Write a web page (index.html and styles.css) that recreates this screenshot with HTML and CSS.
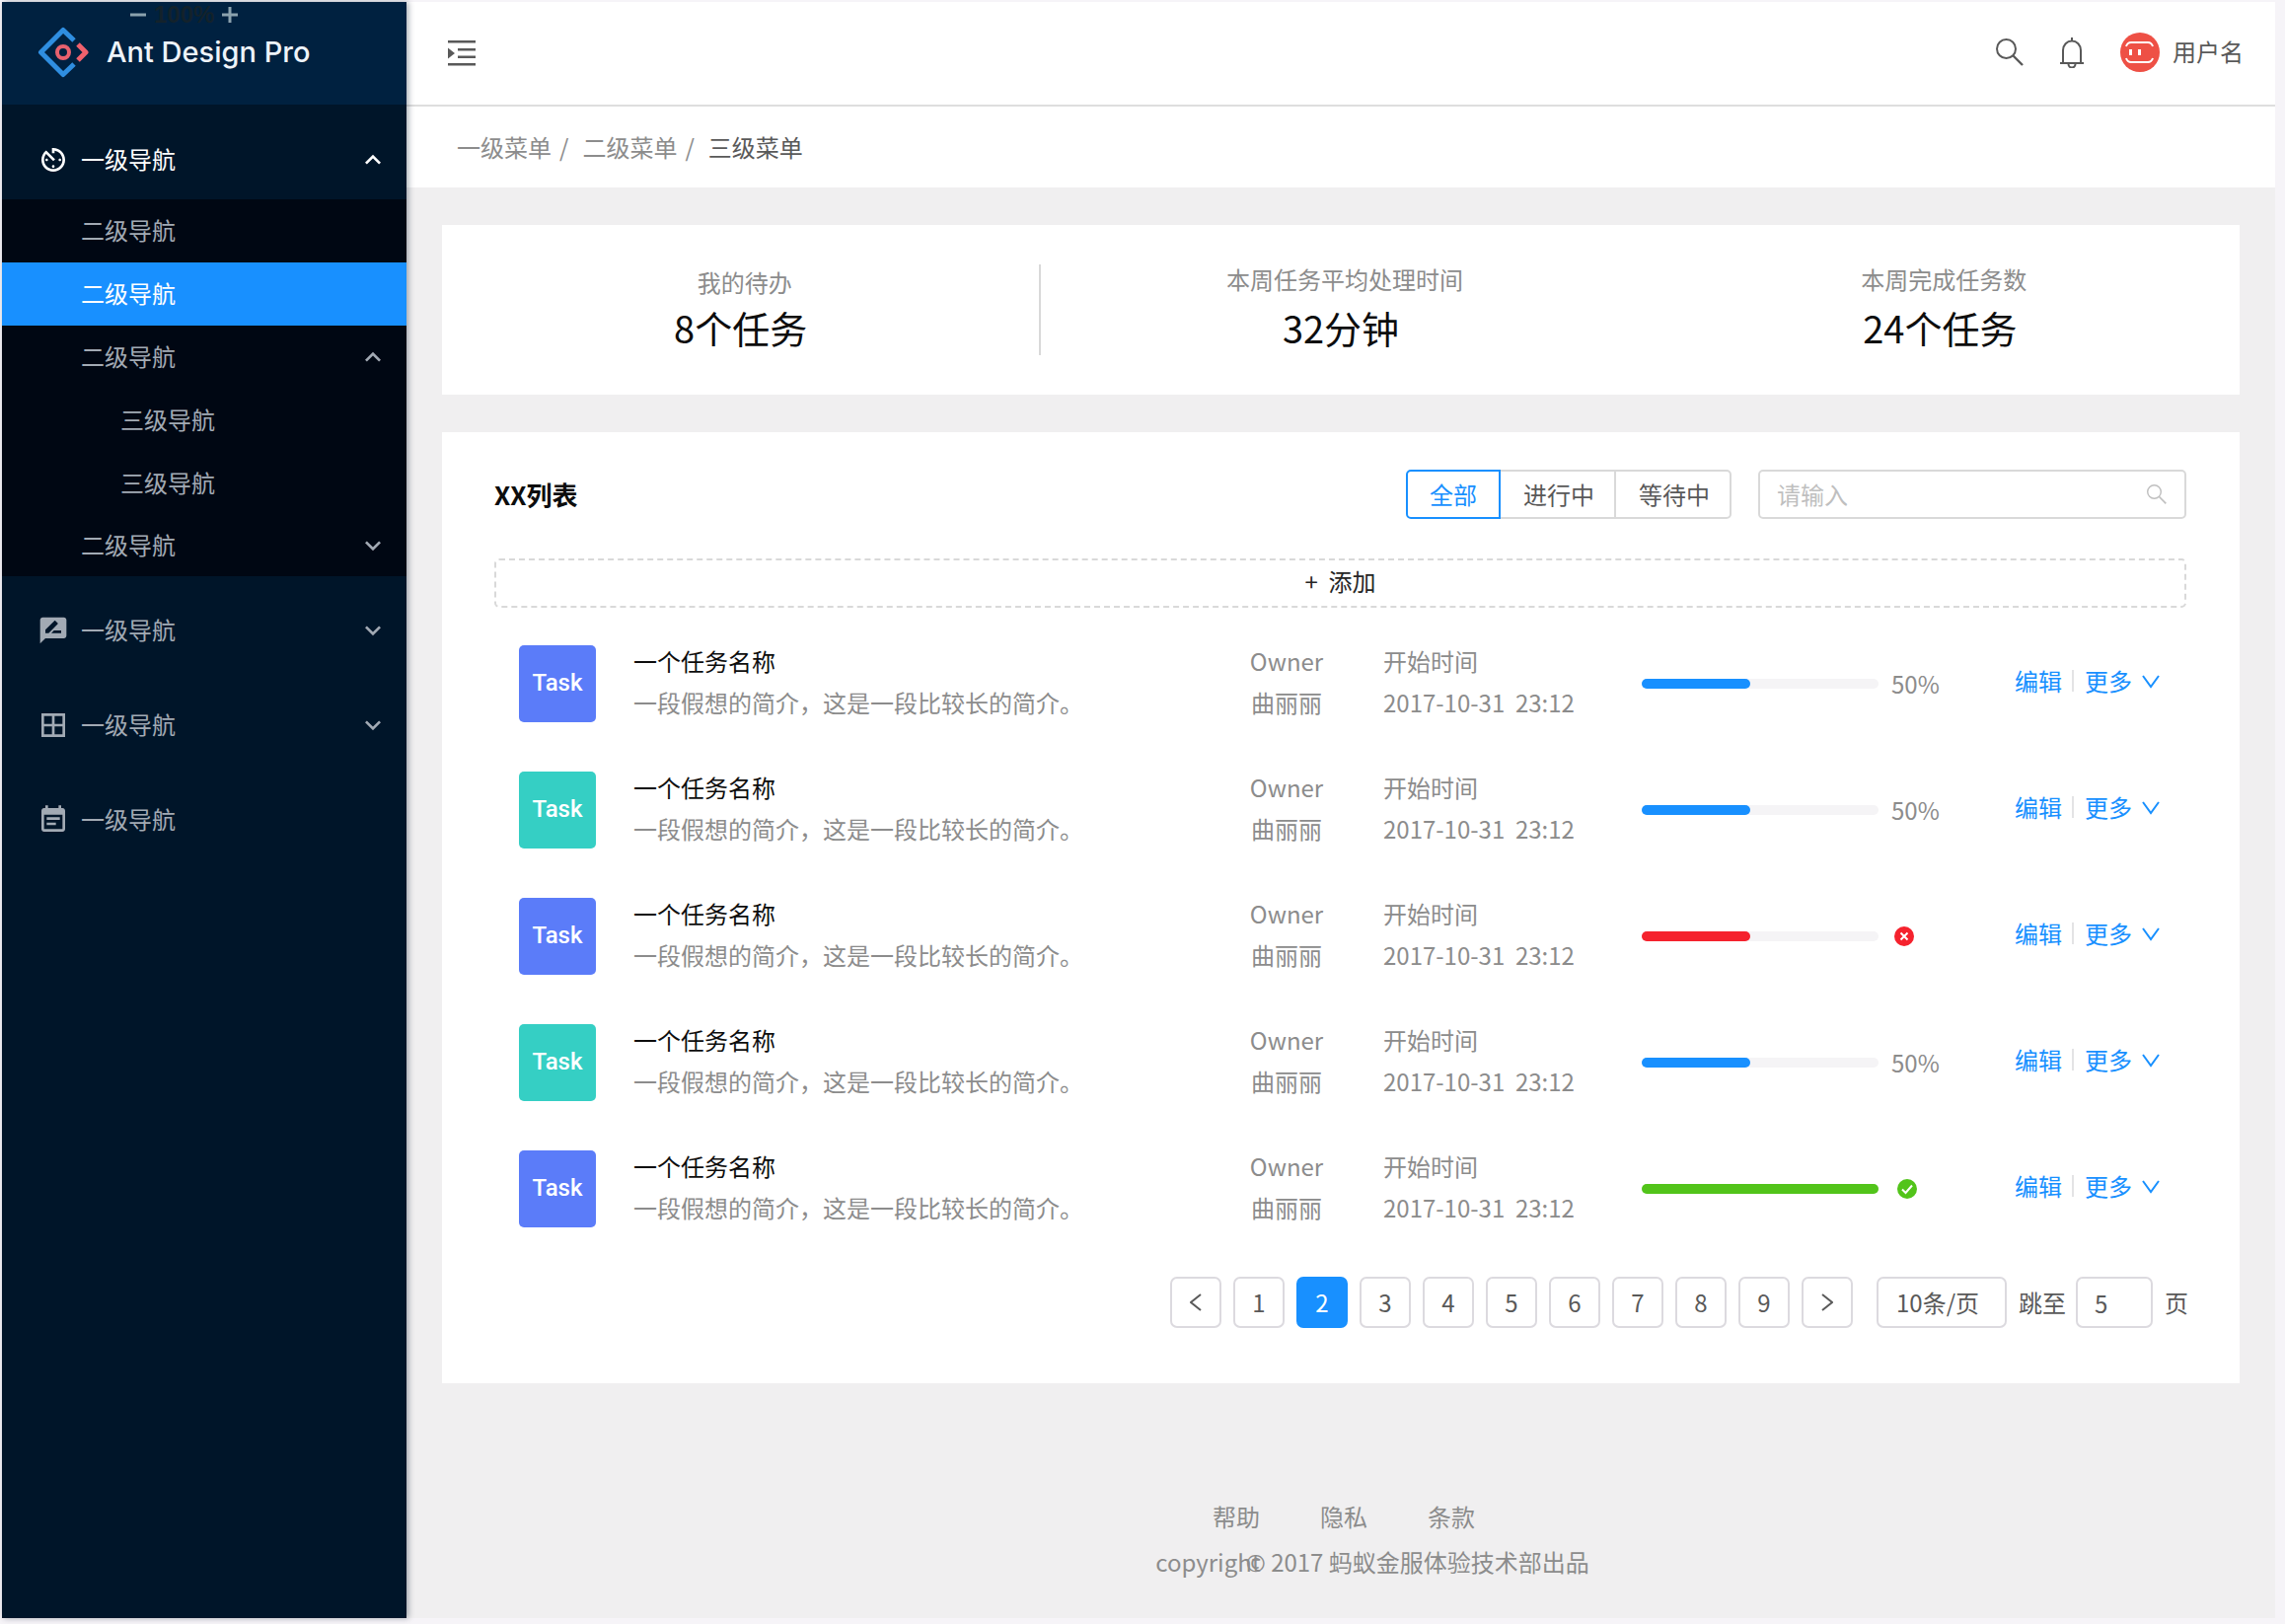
FILE: index.html
```html
<!DOCTYPE html>
<html lang="zh-CN">
<head>
  <meta charset="UTF-8">
  <meta name="viewport" content="width=device-width, initial-scale=1.0">
  <title>Ant Design Pro</title>
  <link rel="stylesheet" href="styles.css">
</head>
<body>

<!-- icons -->
<svg class="sprite" aria-hidden="true">
  <symbol id="i-up" viewBox="0 0 24 24"><path d="M7.41 15.41L12 10.83l4.59 4.58L18 14l-6-6-6 6z"/></symbol>
  <symbol id="i-down" viewBox="0 0 24 24"><path d="M7.41 8.59L12 13.17l4.59-4.58L18 10l-6 6-6-6z"/></symbol>
  <symbol id="i-timer" viewBox="0 0 24 24"><path d="M11 17c0 .55.45 1 1 1s1-.45 1-1-.45-1-1-1-1 .45-1 1zm0-14v4h2V5.08c3.39.49 6 3.39 6 6.92 0 3.87-3.13 7-7 7s-7-3.13-7-7c0-1.68.59-3.22 1.58-4.42L12 13l1.41-1.41-6.8-6.8v.02C4.42 6.45 3 9.05 3 12c0 4.97 4.02 9 9 9 4.97 0 9-4.03 9-9s-4.03-9-9-9h-1zm7 9c0-.55-.45-1-1-1s-1 .45-1 1 .45 1 1 1 1-.45 1-1zM6 12c0 .55.45 1 1 1s1-.45 1-1-.45-1-1-1-1 .45-1 1z"/></symbol>
  <symbol id="i-review" viewBox="0 0 24 24"><path d="M20 2H4c-1.1 0-1.99.9-1.99 2L2 22l4-4h14c1.1 0 2-.9 2-2V4c0-1.1-.9-2-2-2zM6 14v-2.47l6.88-6.88c.2-.2.51-.2.71 0l1.77 1.77c.2.2.2.51 0 .71L8.47 14H6zm12 0h-7.5l2-2H18v2z"/></symbol>
  <symbol id="i-grid" viewBox="0 0 24 24"><path d="M3 3v18h18V3H3zm8 16H5v-6h6v6zm0-8H5V5h6v6zm8 8h-6v-6h6v6zm0-8h-6V5h6v6z"/></symbol>
  <symbol id="i-note" viewBox="0 0 24 24"><path d="M17 10H7v2h10v-2zm2-7h-1V1h-2v2H8V1H6v2H5c-1.11 0-1.99.9-1.99 2L3 19c0 1.1.89 2 2 2h14c1.1 0 2-.9 2-2V5c0-1.1-.9-2-2-2zm0 16H5V8h14v11zm-5-5H7v2h7v-2z"/></symbol>
  <symbol id="i-search" viewBox="0 0 28 28"><circle cx="10.5" cy="10.5" r="9.5" fill="none" stroke="currentColor" stroke-width="2"/><path d="M17.5 17.5L27 27" stroke="currentColor" stroke-width="2.4"/></symbol>
  <symbol id="i-more" viewBox="0 0 18 14"><path d="M1 1l8 11 8-11" fill="none" stroke="currentColor" stroke-width="2"/></symbol>
</svg>

<div class="layout">
  <aside class="sider">
    <div class="logo">
      <div class="zoom">
        <svg width="16" height="16" stroke="currentColor" stroke-width="3"><path d="M0 8h16"/></svg>
        <b>100%</b>
        <svg width="16" height="16" stroke="currentColor" stroke-width="3"><path d="M0 8h16M8 0v16"/></svg>
      </div>
      <svg width="52" height="52" viewBox="0 0 52 52" fill="none" stroke-width="5">
        <path d="M37 14L26 3.500 3.500 26 26 48.500 37 38" stroke="#2f8ee0" stroke-linejoin="round"/>
        <circle cx="26" cy="26" r="6" stroke="#e8616e" stroke-width="4"/>
        <path d="M41 18l8 8-8 8" stroke="#f0616d" stroke-linejoin="round"/>
      </svg>
      <span class="logo-text">Ant Design Pro</span>
    </div>
    <nav class="menu">
      <button class="menu-item open"><svg class="icon"><use href="#i-timer"/></svg><span>一级导航</span><svg class="icon arrow"><use href="#i-up"/></svg></button>
      <div class="submenu">
        <a class="sub-item" href="#"><span>二级导航</span></a>
        <a class="sub-item active" href="#"><span>二级导航</span></a>
        <button class="sub-item"><span>二级导航</span><svg class="icon arrow"><use href="#i-up"/></svg></button>
        <a class="sub-item third" href="#"><span>三级导航</span></a>
        <a class="sub-item third" href="#"><span>三级导航</span></a>
        <button class="sub-item last"><span>二级导航</span><svg class="icon arrow"><use href="#i-down"/></svg></button>
      </div>
      <button class="menu-item"><svg class="icon"><use href="#i-review"/></svg><span>一级导航</span><svg class="icon arrow"><use href="#i-down"/></svg></button>
      <button class="menu-item"><svg class="icon"><use href="#i-grid"/></svg><span>一级导航</span><svg class="icon arrow"><use href="#i-down"/></svg></button>
      <a class="menu-item" href="#"><svg class="icon"><use href="#i-note"/></svg><span>一级导航</span></a>
    </nav>
  </aside>

  <div class="main">
    <header class="header">
      <button class="icon-btn" aria-label="收起菜单">
        <svg width="28" height="26" viewBox="0 0 28 26" fill="currentColor"><path d="M0 0h28v2.500H0zM10 8h18v2.500H10zM10 15.500h18V18H10zM0 23h28v2.500H0zM0 7.500l7 5.500-7 5.500z"/></svg>
      </button>
      <div class="header-right">
        <button class="icon-btn" aria-label="搜索"><svg width="28" height="28"><use href="#i-search"/></svg></button>
        <button class="icon-btn" aria-label="通知">
          <svg width="24" height="32" viewBox="0 0 24 32" fill="none" stroke="currentColor" stroke-width="2"><path d="M3 27V14a9 9.500 0 0 1 18 0v13M0 27h24M12 1v4M8.500 28a3.500 3.500 0 0 0 7 0"/></svg>
        </button>
        <a class="user" href="#">
          <svg width="40" height="40" viewBox="0 0 40 40"><circle cx="20" cy="20" r="20" fill="#ee5045"/><path d="M6 14c1-3 3-4 5-4h17c3 0 4 1 5 4M6 26c1 3 3 4 5 4h17c3 0 4-1 5-4" fill="none" stroke="#fff" stroke-width="2"/><path d="M9 17h3v6H9zM18 17h3v6h-3z" fill="#fff"/></svg>
          <span>用户名</span>
        </a>
      </div>
    </header>

    <nav class="breadcrumb">
      <a href="#">一级菜单</a><span class="sep">/</span><a href="#">二级菜单</a><span class="sep">/</span><span class="current">三级菜单</span>
    </nav>

    <main class="content">
      <section class="card stats">
        <div class="stat divided"><span class="stat-label">我的待办</span><span class="stat-value">8个任务</span></div>
        <div class="stat"><span class="stat-label">本周任务平均处理时间</span><span class="stat-value">32分钟</span></div>
        <div class="stat"><span class="stat-label">本周完成任务数</span><span class="stat-value">24个任务</span></div>
      </section>

      <section class="card list-card">
        <div class="list-head">
          <h2>XX列表</h2>
          <div class="tabs">
            <button class="tab active">全部</button>
            <button class="tab">进行中</button>
            <button class="tab">等待中</button>
          </div>
          <div class="search">
            <input type="text" placeholder="请输入" aria-label="搜索任务">
            <svg width="22" height="20"><use href="#i-search"/></svg>
          </div>
        </div>
        <button class="add">+&nbsp; 添加</button>

        <ul class="list">
          <li class="row">
            <div class="avatar blue">Task</div>
            <div class="info"><span class="name">一个任务名称</span><span>一段假想的简介，这是一段比较长的简介。</span></div>
            <div class="info owner"><span>Owner</span><span>曲丽丽</span></div>
            <div class="info"><span>开始时间</span><span>2017-10-31&nbsp; 23:12</span></div>
            <div class="progress"><div class="bar"><div class="fill" style="width: 46%"></div></div>50%</div>
            <div class="actions"><a href="#">编辑</a><i></i><a href="#">更多<svg width="18" height="14"><use href="#i-more"/></svg></a></div>
          </li>
          <li class="row">
            <div class="avatar green">Task</div>
            <div class="info"><span class="name">一个任务名称</span><span>一段假想的简介，这是一段比较长的简介。</span></div>
            <div class="info owner"><span>Owner</span><span>曲丽丽</span></div>
            <div class="info"><span>开始时间</span><span>2017-10-31&nbsp; 23:12</span></div>
            <div class="progress"><div class="bar"><div class="fill" style="width: 46%"></div></div>50%</div>
            <div class="actions"><a href="#">编辑</a><i></i><a href="#">更多<svg width="18" height="14"><use href="#i-more"/></svg></a></div>
          </li>
          <li class="row">
            <div class="avatar blue">Task</div>
            <div class="info"><span class="name">一个任务名称</span><span>一段假想的简介，这是一段比较长的简介。</span></div>
            <div class="info owner"><span>Owner</span><span>曲丽丽</span></div>
            <div class="info"><span>开始时间</span><span>2017-10-31&nbsp; 23:12</span></div>
            <div class="progress"><div class="bar"><div class="fill error" style="width: 46%"></div></div><svg class="status" viewBox="0 0 20 20"><circle cx="10" cy="10" r="10" fill="#f5222d"/><path d="M6.500 6.500l7 7M13.500 6.500l-7 7" stroke="#fff" stroke-width="2"/></svg></div>
            <div class="actions"><a href="#">编辑</a><i></i><a href="#">更多<svg width="18" height="14"><use href="#i-more"/></svg></a></div>
          </li>
          <li class="row">
            <div class="avatar green">Task</div>
            <div class="info"><span class="name">一个任务名称</span><span>一段假想的简介，这是一段比较长的简介。</span></div>
            <div class="info owner"><span>Owner</span><span>曲丽丽</span></div>
            <div class="info"><span>开始时间</span><span>2017-10-31&nbsp; 23:12</span></div>
            <div class="progress"><div class="bar"><div class="fill" style="width: 46%"></div></div>50%</div>
            <div class="actions"><a href="#">编辑</a><i></i><a href="#">更多<svg width="18" height="14"><use href="#i-more"/></svg></a></div>
          </li>
          <li class="row">
            <div class="avatar blue">Task</div>
            <div class="info"><span class="name">一个任务名称</span><span>一段假想的简介，这是一段比较长的简介。</span></div>
            <div class="info owner"><span>Owner</span><span>曲丽丽</span></div>
            <div class="info"><span>开始时间</span><span>2017-10-31&nbsp; 23:12</span></div>
            <div class="progress"><div class="bar"><div class="fill success" style="width: 100%"></div></div><svg class="status done" viewBox="0 0 20 20"><circle cx="10" cy="10" r="10" fill="#52c41a"/><path d="M5 10.500l3.500 3.500L15 6.500" fill="none" stroke="#fff" stroke-width="2"/></svg></div>
            <div class="actions"><a href="#">编辑</a><i></i><a href="#">更多<svg width="18" height="14"><use href="#i-more"/></svg></a></div>
          </li>
        </ul>

        <div class="pagination">
          <button class="page" aria-label="上一页"><svg width="12" height="18" viewBox="0 0 12 18" fill="none" stroke="currentColor" stroke-width="2"><path d="M11 1L1 9l10 8"/></svg></button>
          <button class="page">1</button>
          <button class="page active">2</button>
          <button class="page">3</button>
          <button class="page">4</button>
          <button class="page">5</button>
          <button class="page">6</button>
          <button class="page">7</button>
          <button class="page">8</button>
          <button class="page">9</button>
          <button class="page" aria-label="下一页"><svg width="12" height="18" viewBox="0 0 12 18" fill="none" stroke="currentColor" stroke-width="2"><path d="M1 1l10 8-10 8"/></svg></button>
          <select class="page-size" aria-label="每页条数"><option>10条/页</option></select>
          <div class="jump"><label for="jump">跳至</label><input id="jump" type="text" value="5"><span class="unit">页</span></div>
        </div>
      </section>
    </main>

    <footer class="footer">
      <div class="footer-links"><a href="#">帮助</a><a href="#">隐私</a><a href="#">条款</a></div>
      <p class="copyright">copyright<span class="mark">©</span> 2017 蚂蚁金服体验技术部出品</p>
    </footer>
  </div>
</div>

</body>
</html>
```
FILE: styles.css
```css
* {
  box-sizing: border-box;
}
body {
  margin: 0;
  padding: 2px 10px 6px 2px;
  background-color: #f6f4f8;
  color: #8c8c8c;
  font-family: "Noto Sans CJK SC", sans-serif;
  font-size: 24px;
  line-height: 36px;
}
a {
  color: inherit;
  text-decoration: none;
}
button, input, select {
  font: inherit;
  color: inherit;
  margin: 0;
}
button {
  padding: 0;
  border: none;
  background: none;
  cursor: pointer;
}
.sprite {
  position: absolute;
  width: 0;
  height: 0;
}
.layout {
  display: flex;
  min-height: calc(100vh - 8px);
}

/* sidebar */
.sider {
  position: relative;
  width: 410px;
  flex-shrink: 0;
  background-color: #001529;
  color: #a2aab4;
  box-shadow: 2px 0 6px rgba(0, 21, 41, 0.35);
}
.logo {
  position: relative;
  display: flex;
  align-items: center;
  gap: 18px;
  height: 104px;
  padding: 0 36px 2px;
  background-color: #002140;
}
.logo-text {
  color: #eef3f9;
  font-family: Inter, sans-serif;
  font-size: 29px;
  font-weight: 500;
}
.zoom {
  position: absolute;
  top: 0;
  left: 130px;
  display: flex;
  align-items: center;
  gap: 8px;
  color: #8ba2ae;
  font-family: "Liberation Sans", sans-serif;
  line-height: 26px;
}
.zoom b {
  color: #13222b;
}
.menu {
  padding-top: 16px;
}
.icon {
  width: 32px;
  height: 32px;
  fill: currentColor;
}
.menu-item {
  display: flex;
  align-items: center;
  gap: 12px;
  width: 100%;
  height: 96px;
  padding: 0 18px 0 36px;
}
.menu-item.open {
  height: 80px;
  color: #fff;
}
.menu-item span, .sub-item span {
  padding-bottom: 2px;
}
.arrow {
  margin-left: auto;
}
.submenu {
  margin-bottom: 7px;
  background-color: #000713;
}
.sub-item {
  display: flex;
  align-items: center;
  width: 100%;
  height: 64px;
  padding: 0 18px 0 80px;
}
.sub-item.third {
  padding-left: 120px;
}
.sub-item.last {
  height: 62px;
}
.sub-item.active {
  background-color: #1890ff;
  color: #fff;
}

/* header */
.main {
  flex: 1;
  display: flex;
  flex-direction: column;
  background-color: #f0eff0;
}
.header {
  display: flex;
  justify-content: space-between;
  align-items: center;
  height: 106px;
  padding: 0 32px 0 42px;
  border-bottom: 2px solid #dedede;
  background-color: #fff;
  color: #595959;
}
.icon-btn {
  display: flex;
}
.header-right {
  display: flex;
  align-items: center;
  gap: 37px;
  padding-bottom: 2px;
}
.user {
  display: flex;
  align-items: center;
  gap: 13px;
}
.user span {
  padding-bottom: 2px;
}
.breadcrumb {
  display: flex;
  align-items: center;
  height: 82px;
  padding: 0 51px;
  background-color: #fff;
}
.sep {
  margin: 0 14px 0 8px;
}
.current {
  color: #595959;
}

/* content */
.content {
  padding: 38px 36px 0;
}
.card {
  background-color: #fff;
}
.stats {
  display: grid;
  grid-template-columns: repeat(3, 1fr);
  padding: 40px 0;
  margin-bottom: 38px;
}
.stat {
  display: flex;
  flex-direction: column;
  align-items: center;
  height: 92px;
}
.stat.divided {
  border-right: 2px solid #d9d9d9;
}
.stat-label {
  padding-left: 8px;
  line-height: 30px;
}
.stat.divided .stat-label {
  line-height: 36px;
}
.stat-value {
  color: #0d0d0d;
  font-size: 38px;
  line-height: 68px;
}
.stat.divided .stat-value {
  line-height: 56px;
}
.list-card {
  padding: 38px 54px 56px 53px;
}
.list-head {
  display: flex;
  align-items: center;
  margin-bottom: 40px;
}
.list-head h2 {
  margin: 0 auto 0 0;
  color: #0d0d0d;
  font-size: 26px;
  font-weight: bold;
}
.tabs {
  display: flex;
  margin-right: 27px;
  color: #595959;
}
.tab {
  height: 50px;
  padding: 0 20px 0 23px;
  border: 2px solid #d9d9d9;
}
.tab + .tab {
  margin-left: -2px;
}
.tab:last-child {
  border-radius: 0 5px 5px 0;
}
.tab.active {
  z-index: 1;
  padding: 0 22px;
  border-color: #1890ff;
  border-radius: 5px 0 0 5px;
  color: #1890ff;
}
.search {
  display: flex;
  align-items: center;
  width: 434px;
  height: 50px;
  padding: 0 17px;
  border: 2px solid #d9d9d9;
  border-radius: 5px;
  color: #bfbfbf;
}
.search input {
  flex: 1;
  min-width: 0;
  padding: 0;
  border: none;
  outline: none;
  color: #595959;
}
.search input::placeholder {
  color: #bfbfbf;
}
.add {
  display: block;
  width: 100%;
  height: 50px;
  padding-bottom: 4px;
  border: 2px dashed #d9d9d9;
  border-radius: 5px;
  color: #262626;
}

/* task list */
.list {
  margin: 13px 0 25px;
  padding: 0 26px 0 25px;
  list-style: none;
}
.row {
  display: grid;
  grid-template-columns: 116px 1fr 136px 262px 378px 148px;
  align-items: center;
  height: 128px;
}
.avatar {
  width: 78px;
  height: 78px;
  border-radius: 5px;
  color: #fff;
  font-family: Roboto, sans-serif;
  font-weight: 500;
  line-height: 76px;
  text-align: center;
}
.avatar.blue {
  background-color: #5b7cf9;
}
.avatar.green {
  background-color: #35cfc4;
}
.info {
  display: flex;
  flex-direction: column;
  gap: 6px;
  padding-bottom: 4px;
}
.owner {
  width: 76px;
  align-items: center;
}
.name {
  color: #0d0d0d;
}
.progress {
  display: flex;
  align-items: center;
  gap: 13px;
}
.bar {
  width: 240px;
  height: 10px;
  border-radius: 5px;
  background-color: #f5f4f6;
}
.fill {
  height: 100%;
  border-radius: 5px;
  background-color: #1890ff;
}
.fill.error {
  background-color: #f5222d;
}
.fill.success {
  background-color: #52c41a;
}
.status {
  width: 20px;
  height: 20px;
  margin-left: 3px;
}
.status.done {
  margin-left: 6px;
}
.actions {
  display: flex;
  align-items: center;
  padding-bottom: 6px;
  color: #1890ff;
}
.actions i {
  width: 2px;
  height: 22px;
  margin: 0 11px 0 10px;
  background-color: #e3e3e5;
}
.actions svg {
  margin-left: 10px;
  vertical-align: 2px;
}

/* pagination */
.pagination {
  display: flex;
  justify-content: flex-end;
  align-items: center;
  gap: 12px;
  margin-right: -2px;
  color: #595959;
}
.page {
  display: flex;
  justify-content: center;
  align-items: center;
  width: 52px;
  height: 52px;
  border: 2px solid #dcdadf;
  border-radius: 7px;
}
.page.active {
  border-color: #1890ff;
  background-color: #1890ff;
  color: #fff;
}
.page-size {
  appearance: none;
  width: 132px;
  height: 52px;
  margin-left: 12px;
  padding: 0 18px;
  border: 2px solid #dcdadf;
  border-radius: 7px;
  background-color: #fff;
}
.jump {
  display: flex;
  align-items: center;
}
.jump input {
  width: 78px;
  height: 52px;
  margin: 0 12px 0 10px;
  padding: 0 17px;
  border: 2px solid #dcdadf;
  border-radius: 7px;
}

/* footer */
.footer {
  display: flex;
  flex-direction: column;
  align-items: center;
  gap: 10px;
  margin-top: auto;
  padding: 40px 0 38px;
}
.footer-links {
  display: flex;
  gap: 61px;
  padding-left: 6px;
}
.copyright {
  margin: 0;
  padding-left: 64px;
}
.mark {
  margin-left: -15px;
  font-family: "Noto Sans", sans-serif;
}
```
